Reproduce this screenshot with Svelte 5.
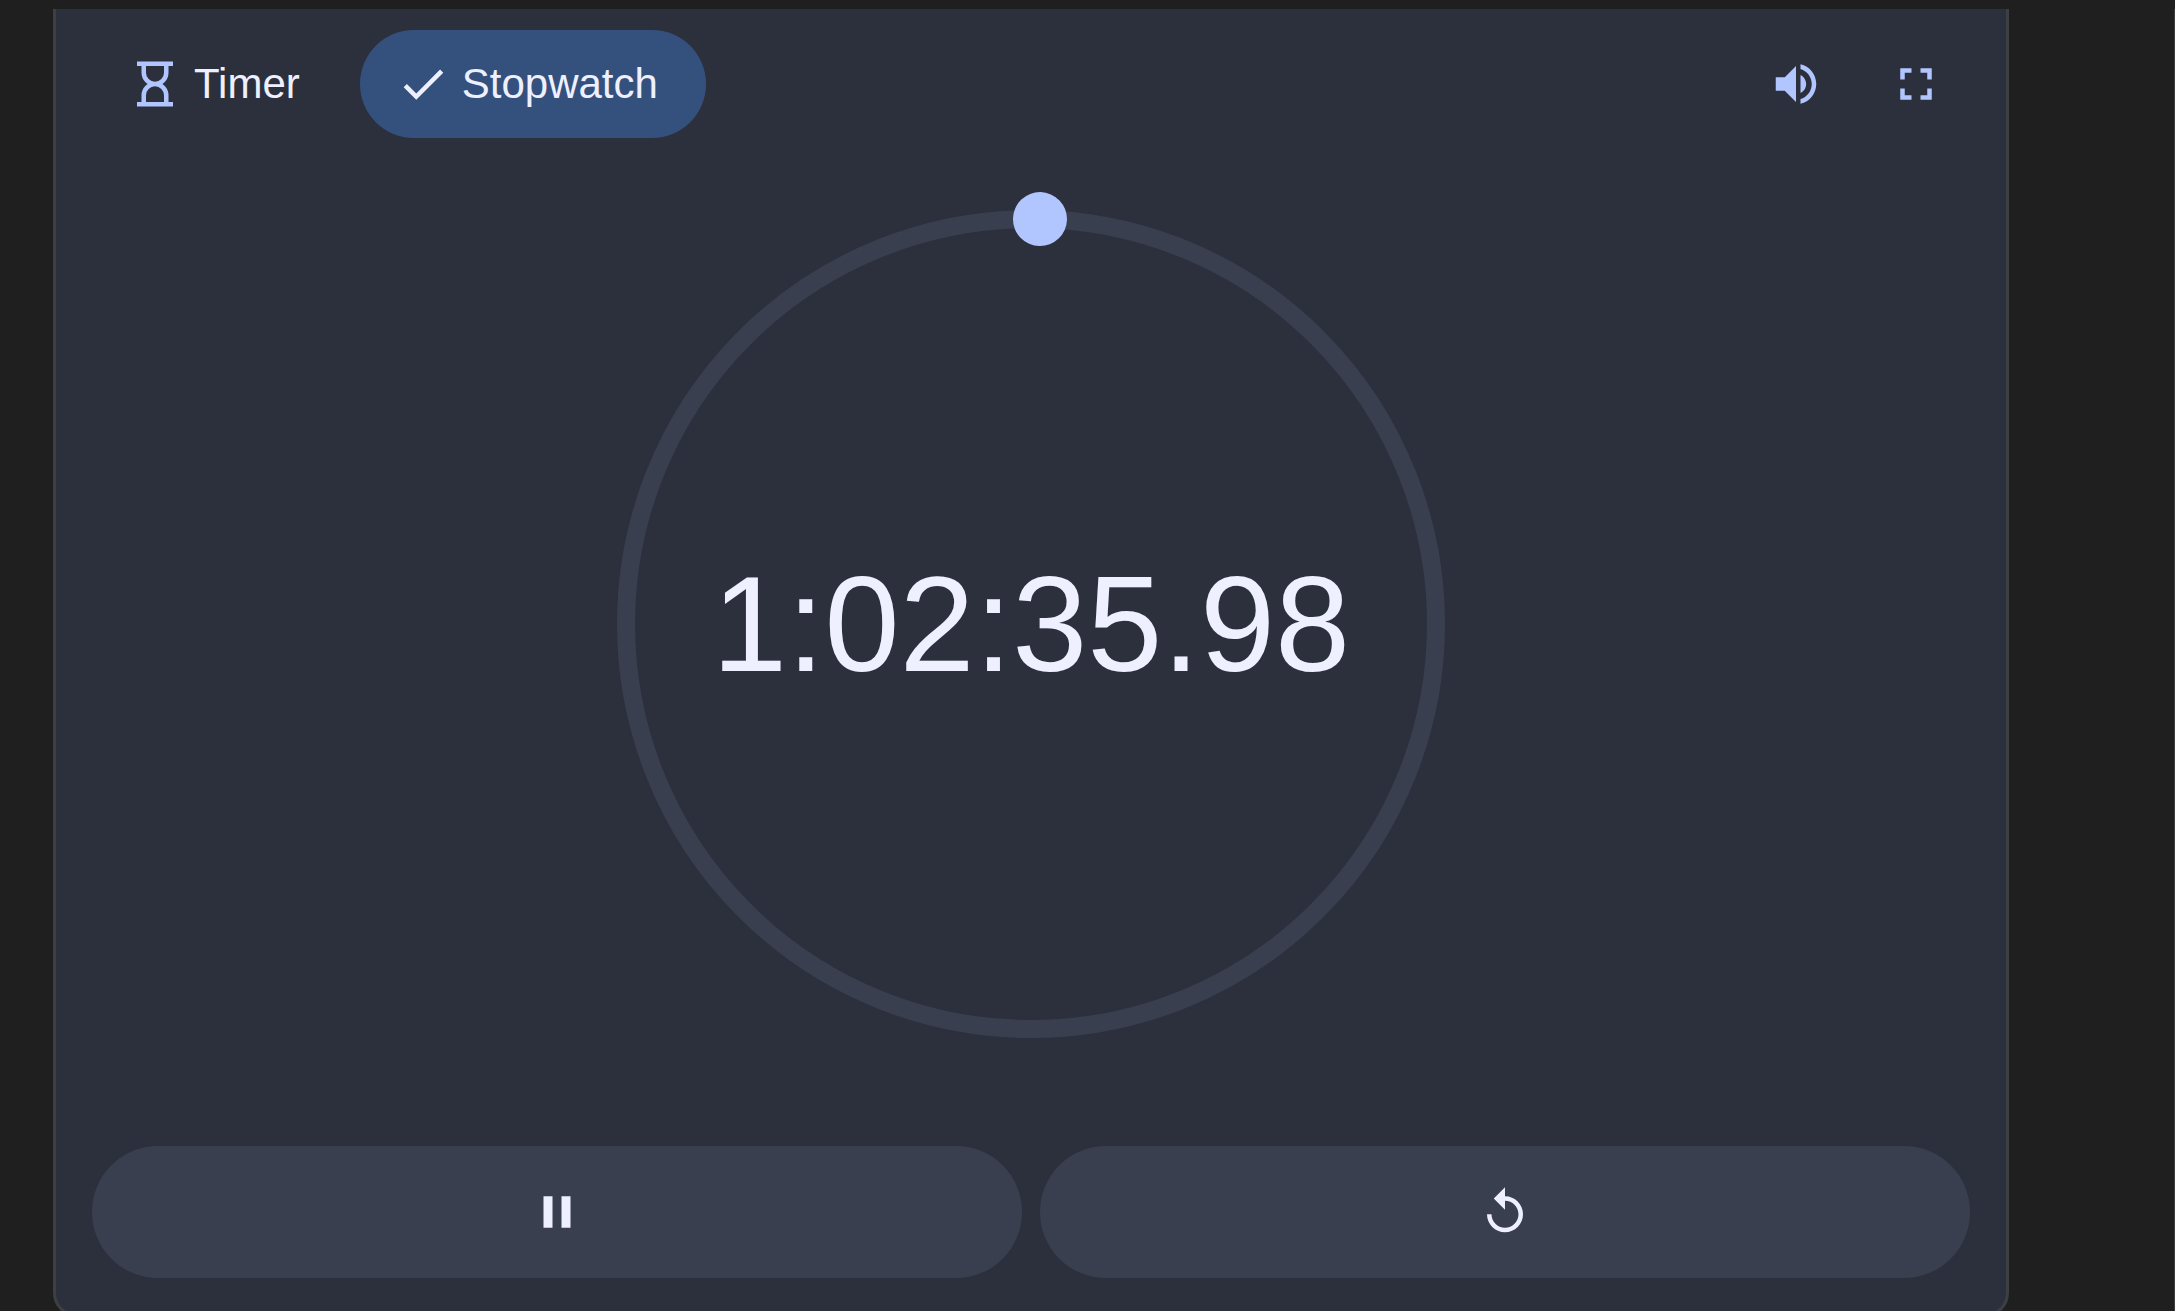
<script lang="ts">
    type Mode = 'timer' | 'stopwatch';

    let mode: Mode = $state('stopwatch');
    let muted: boolean = $state(false);
    let elapsed: number = $state(3755980);
    let handAngle: number = $state(1.27);

    const pad = (value: number): string => String(value).padStart(2, '0');

    function format(ms: number): string {
        const hours = Math.floor(ms / 3600000);
        const minutes = Math.floor(ms / 60000) % 60;
        const seconds = Math.floor(ms / 1000) % 60;
        const hundredths = Math.floor(ms / 10) % 100;
        return `${hours}:${pad(minutes)}:${pad(seconds)}.${pad(hundredths)}`;
    }

    function reset(): void {
        elapsed = 0;
        handAngle = 0;
    }
</script>

{#snippet check()}
    <svg class="icon" viewBox="0 0 24 24" aria-hidden="true">
        <path d="M9 16.17L4.83 12l-1.42 1.41L9 19 21 7l-1.41-1.41z" />
    </svg>
{/snippet}

<main>
    <section class="card">
        <header>
            <button class="tab" class:selected={mode === 'timer'} onclick={() => (mode = 'timer')}>
                {#if mode === 'timer'}
                    {@render check()}
                {:else}
                    <svg class="icon" viewBox="0 0 24 24" aria-hidden="true">
                        <path d="M4 2h16v2H4zM4 20h16v2H4z" />
                        <path class="line" d="M7 4v3a5 5 0 0 0 10 0V4M7 20v-3a5 5 0 0 1 10 0v3" />
                    </svg>
                {/if}
                Timer
            </button>
            <button class="tab" class:selected={mode === 'stopwatch'} onclick={() => (mode = 'stopwatch')}>
                {#if mode === 'stopwatch'}
                    {@render check()}
                {/if}
                Stopwatch
            </button>

            <div class="tools">
                <button class="tool" aria-label="Sound" aria-pressed={!muted} onclick={() => (muted = !muted)}>
                    <svg class="icon" viewBox="0 0 24 24" aria-hidden="true">
                        <path d="M3 9v6h4l5 5V4L7 9H3z" />
                        {#if !muted}
                            <path d="M16.5 12c0-1.77-1.02-3.29-2.5-4.03v8.05c1.48-.73 2.5-2.25 2.5-4.02zM14 3.23v2.06c2.89.86 5 3.54 5 6.71s-2.11 5.85-5 6.71v2.06c4.01-.91 7-4.49 7-8.77s-2.99-7.86-7-8.77z" />
                        {/if}
                    </svg>
                </button>
                <button class="tool" aria-label="Full screen">
                    <svg class="icon" viewBox="0 0 24 24" aria-hidden="true">
                        <path d="M7 14H5v5h5v-2H7v-3zm-2-4h2V7h3V5H5v5zm12 7h-3v2h5v-5h-2v3zM14 5v2h3v3h2V5h-5z" />
                    </svg>
                </button>
            </div>
        </header>

        <div class="dial">
            <svg class="ring" viewBox="0 0 864 864" aria-hidden="true">
                <circle class="track" cx="432" cy="432" r="405" />
                <circle class="hand" cx="432" cy="27" r="27" transform="rotate({handAngle} 432 432)" />
            </svg>
            <time>{format(elapsed)}</time>
        </div>

        <div class="actions">
            <button class="action" aria-label="Pause">
                <svg class="icon" viewBox="0 0 24 24" aria-hidden="true">
                    <path d="M6 19h4V5H6v14zm8-14v14h4V5h-4z" />
                </svg>
            </button>
            <button class="action" aria-label="Reset" onclick={reset}>
                <svg class="icon" viewBox="0 0 24 24" aria-hidden="true">
                    <path d="M12 5V1L7 6l5 5V7c3.31 0 6 2.69 6 6s-2.69 6-6 6-6-2.69-6-6H4c0 4.42 3.58 8 8 8s8-3.58 8-8-3.58-8-8-8z" />
                </svg>
            </button>
        </div>
    </section>
</main>

<style>
    :global(body) {
        background: #1f1f1f;
        overflow: hidden;
    }

    main {
        margin-top: 9px;
        padding: 0 165px 0 53px;
        border-right: 1px solid #3c4043;
        font-family: Arial, "Liberation Sans", sans-serif;
    }

    .card {
        padding: 21px 36px 36px;
        background: #2c303d;
        border: 3px solid #3c4043;
        border-top: 0;
        border-radius: 0 0 24px 24px;
    }

    button {
        display: flex;
        align-items: center;
        justify-content: center;
        margin: 0;
        padding: 0;
        border: 0;
        background: none;
        color: #eef0ff;
        font: inherit;
        cursor: pointer;
    }

    .icon {
        width: 54px;
        height: 54px;
        flex: none;
        fill: currentColor;
    }

    .line {
        fill: none;
        stroke: currentColor;
        stroke-width: 2;
    }

    header {
        display: flex;
        gap: 12px;
    }

    .tab {
        gap: 12px;
        height: 108px;
        padding: 0 48px 0 36px;
        border-radius: 54px;
        font-size: 42px;
    }

    .tab.selected {
        background: #34517d;
    }

    .tab:not(.selected) .icon {
        color: #b1c5ff;
    }

    .tools {
        display: flex;
        gap: 12px;
        margin-left: auto;
    }

    .tool {
        width: 108px;
        height: 108px;
        border-radius: 50%;
        color: #b1c5ff;
    }

    .dial {
        display: grid;
        place-items: center;
        margin: 54px 0 90px;
    }

    .dial > * {
        grid-area: 1 / 1;
    }

    .ring {
        width: 100%;
        max-width: 864px;
    }

    .track {
        fill: none;
        stroke: #3a3f50;
        stroke-width: 18;
    }

    .hand {
        fill: #b1c5ff;
    }

    time {
        color: #eef0ff;
        font-size: 135px;
    }

    .actions {
        display: grid;
        grid-template-columns: 1fr 1fr;
        gap: 18px;
    }

    .action {
        height: 132px;
        border-radius: 66px;
        background: #3a3f50;
    }
</style>
